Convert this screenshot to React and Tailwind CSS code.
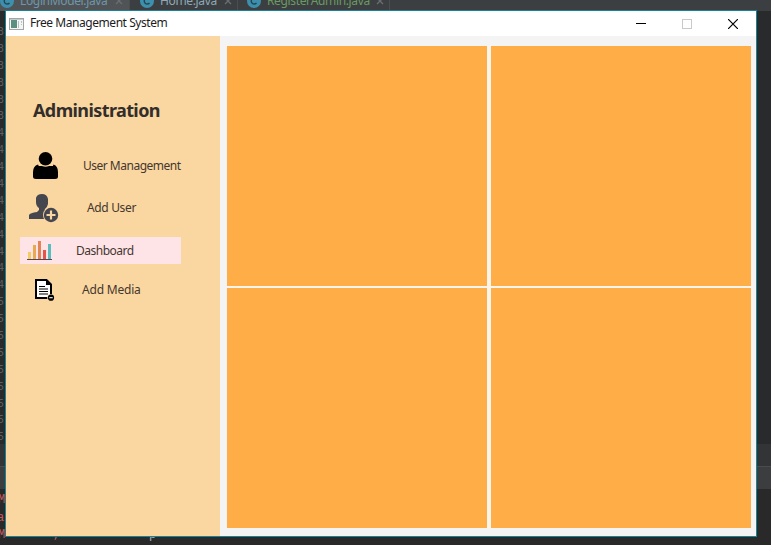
import React from "react";

const gutter = "3333334444444444555555555".split("");

function EditorTab({ name, className, textClass }) {
  return (
    <div className={`flex h-[11px] shrink-0 items-end overflow-hidden border-r border-[#4b4e50] ${className}`}>
      <svg viewBox="0 0 14 14" className="-mb-px h-[14px] w-[14px] shrink-0 translate-y-[-4px]">
        <circle cx="7" cy="7" r="7" fill="#3d8fae" />
        <path d="M9.5 5a3 3 0 1 0 0 4" fill="none" stroke="#244653" strokeWidth="1.4" />
      </svg>
      <span className={`ml-[6px] -translate-y-[2px] whitespace-nowrap text-[12px] leading-[16px] tracking-[-0.35px] ${textClass}`}>{name}</span>
      <svg viewBox="0 0 8 8" className="ml-[6px] h-[8px] w-[8px] shrink-0 -translate-y-[6px]" stroke="#6b6e70" strokeWidth="1.3">
        <path d="M1 1l6 6M7 1l-6 6" />
      </svg>
    </div>
  );
}

function EditorBackground() {
  return (
    <div className="flex h-full flex-col bg-[#292929]">
      <div className="flex h-[11px] overflow-hidden bg-[#3c3f41]">
        <EditorTab name="LoginModel.java" className="w-[130px] bg-[#505456]" textClass="w-[89px] text-[#6f97ab]" />
        <EditorTab name="Home.java" className="w-[108px] pl-[10px]" textClass="w-[58px] text-[#8fa9b8]" />
        <EditorTab name="RegisterAdmin.java" className="w-[152px] pl-[9px]" textClass="w-[103px] text-[#6b9a63]" />
      </div>
      <div className="flex h-[433px] flex-col bg-[#292a2b] pt-[12px]">
        {gutter.map((n, i) => (
          <span key={i} className="block h-[16.9px] w-[5px] shrink-0 -indent-[2px] font-['DejaVu_Sans_Mono',monospace] text-[10px] leading-[17px] text-[#5c5f61]">{n}</span>
        ))}
      </div>
      <div className="h-[23px] border-b border-[#4a4b4c] bg-[#333435]" />
      <div className="h-[22px] bg-[#3b3d3f]" />
      <div className="flex flex-col pt-[3px] font-['Liberation_Mono',monospace] text-[12px] leading-[17.5px] text-[#c95a5a]">
        <span className="-indent-[2px]">M</span>
        <span className="-indent-[3px]">a</span>
        <div className="flex">
          <span className="w-[53px] -indent-[2px]">M</span>
          <span className="w-[96px]">,</span>
          <span className="text-[#a9adb0]">p</span>
        </div>
      </div>
    </div>
  );
}

function PersonIcon() {
  return (
    <svg viewBox="0 0 26 28" className="h-[28px] w-[26px]">
      <path d="M5 12.500Q6.500 17 13 17T20.500 12.500Q25 14 25 20V24.500Q25 27 22 27H3Q0 27 0 24.500V20Q0 14 5 12.500Z" />
      <path d="M3 14H22L24 18V22H1V18Z" />
      <ellipse cx="12.500" cy="7" rx="7.700" ry="7.800" fill="#fad6a0" />
      <ellipse cx="12.500" cy="6.800" rx="6.800" ry="6.800" />
    </svg>
  );
}

function AddPersonIcon() {
  return (
    <svg viewBox="0 0 30 29" className="h-[29px] w-[30px]">
      <path d="M7 4Q8 0 13 0T19 5V10Q18 14 16 15V18L20 20V25H0V21Q1 19 8 18L10 16V14Q7 12 7 8Z" fill="#46474e" />
      <circle cx="22" cy="21" r="8" fill="#fad6a0" />
      <circle cx="22" cy="21" r="7.200" fill="#46474e" />
      <path d="M17.500 21h9M22 16.500v9" stroke="#fad6a0" strokeWidth="2.200" />
    </svg>
  );
}

function ChartIcon() {
  return (
    <svg viewBox="0 0 25 20" className="h-[20px] w-[25px]" shapeRendering="crispEdges">
      <path d="M1 11h3v7H1z" fill="#f3ca65" />
      <path d="M6 4h3v14H6z" fill="#e9aa4e" />
      <path d="M11 0h3v18h-3z" fill="#e28455" />
      <path d="M16 9h3v9h-3z" fill="#e45645" />
      <path d="M21 3h3v15h-3z" fill="#5bbcbd" />
      <path d="M0 18h25v1H0z" fill="#514750" />
    </svg>
  );
}

function DocumentIcon() {
  return (
    <svg viewBox="0 0 20 22" className="h-[22px] w-[20px]">
      <path d="M1 1H11.500L16 5.500V19H1Z" fill="#fff" stroke="#000" strokeWidth="2" />
      <path d="M11 1V6H17Z" />
      <path d="M4 7.500h6M4 10h9M4 12.500h9M4 15h9" stroke="#000" strokeWidth="1.100" />
      <circle cx="16" cy="18.700" r="3.800" fill="#fad6a0" />
      <circle cx="16" cy="18.700" r="3.100" />
      <path d="M14.300 18.700h3.400" stroke="#fff" strokeWidth="1.100" />
    </svg>
  );
}

function NavLabel({ children, className }) {
  return <span className={`whitespace-nowrap text-[12px] text-[#44372f] ${className}`}>{children}</span>;
}

function Sidebar() {
  return (
    <nav className="flex w-[214px] flex-col bg-[#fad6a0]">
      <h1 className="mt-[61px] ml-[27px] text-[18px] leading-[26px] font-bold tracking-[-0.6px] text-[#332e2b]">Administration</h1>
      <div className="mt-[29px] flex h-[28px] items-center pl-[27px]">
        <PersonIcon />
        <NavLabel className="ml-[24px] tracking-[-0.5px]">User Management</NavLabel>
      </div>
      <div className="mt-[14px] flex h-[29px] items-center pl-[23px]">
        <AddPersonIcon />
        <NavLabel className="ml-[28px] pb-[2px] tracking-[-0.35px]">Add User</NavLabel>
      </div>
      <div className="mt-[14px] ml-[14px] flex h-[27px] w-[161px] items-center bg-[#ffe4e7] pl-[7px]">
        <ChartIcon />
        <NavLabel className="ml-[24px] tracking-[-0.5px]">Dashboard</NavLabel>
      </div>
      <div className="mt-[15px] flex h-[22px] items-center pl-[29px]">
        <DocumentIcon />
        <NavLabel className="ml-[27px] tracking-[-0.2px]">Add Media</NavLabel>
      </div>
    </nav>
  );
}

function TitleBar() {
  return (
    <header className="flex h-[25px] items-center bg-white">
      <svg viewBox="0 0 15 12" className="ml-[3px] h-[12px] w-[15px]" shapeRendering="crispEdges">
        <rect x=".5" y=".5" width="14" height="11" fill="#f4f5f5" stroke="#a0a5a6" />
        <path d="M1 1h13v1H1z" fill="#c3cbd0" />
        <path d="M2 2h6v8H2z" fill="#5b9080" />
        <path d="M9 3h1v7H9zM12 3h1v2h-1zM12 6h1v1h-1z" fill="#b7bfc2" />
      </svg>
      <span className="ml-[6px] pb-[1px] text-[12px] tracking-[-0.45px] text-[#1c1c1c]">Free Management System</span>
      <div className="mr-[18px] ml-auto flex items-center gap-[36px]">
        <svg viewBox="0 0 10 10" className="h-[10px] w-[10px]" shapeRendering="crispEdges">
          <path d="M0 4h10v1H0z" />
        </svg>
        <svg viewBox="0 0 10 10" className="h-[10px] w-[10px]" shapeRendering="crispEdges">
          <path d="M.5.5h9v9h-9z" fill="none" stroke="#c9c9c9" />
        </svg>
        <svg viewBox="0 0 10 10" className="h-[10px] w-[10px]">
          <path d="M0 0l10 10M10 0L0 10" stroke="#000" strokeWidth="1.200" />
        </svg>
      </div>
    </header>
  );
}

export default function App() {
  return (
    <div className="relative h-[545px] w-[771px] overflow-hidden font-['Noto_Sans','Open_Sans',sans-serif]">
      <EditorBackground />
      <div className="absolute top-[10px] left-[5px] flex h-[527px] w-[752px] flex-col border border-[#168398] bg-[#f4f4f4]">
        <TitleBar />
        <div className="flex flex-1">
          <Sidebar />
          <main className="flex flex-1 pt-[10px] pr-[5px] pb-[8px] pl-[7px]">
            <div className="grid flex-1 grid-cols-2 grid-rows-2 gap-x-[4px] gap-y-[2px] bg-[#faf5ec]">
              <section className="bg-[#ffad46]" />
              <section className="bg-[#ffad46]" />
              <section className="bg-[#ffad46]" />
              <section className="bg-[#ffad46]" />
            </div>
          </main>
        </div>
      </div>
    </div>
  );
}
